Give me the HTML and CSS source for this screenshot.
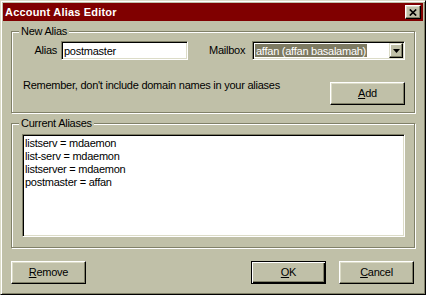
FILE: index.html
```html
<!DOCTYPE html>
<html lang="en">
<head>
  <meta charset="UTF-8" />
  <title>Account Alias Editor</title>
  <link rel="stylesheet" href="styles.css">
</head>
<body>
  <div class="window">
    <div class="titlebar">
      <span class="title">Account Alias Editor</span>
      <button class="close-btn" aria-label="Close">
        <svg width="8" height="7" viewBox="0 0 8 7"><path d="M0.8 0.5 L7.2 6.5 M7.2 0.5 L0.8 6.5" stroke="#000" stroke-width="1.7" fill="none"/></svg>
      </button>
    </div>

    <div class="content">
      <div class="group new-alias">
        <span class="group-title">New Alias</span>
        <div class="alias-row">
          <label class="lbl alias-lbl" for="aliasInput">Alias</label>
          <input type="text" id="aliasInput" class="field alias-input" value="postmaster">
          <span class="lbl mailbox-lbl">Mailbox</span>
          <div class="combo">
            <span class="combo-text"><span class="combo-sel">affan (affan basalamah)</span></span>
            <span class="combo-btn">
              <svg width="7" height="4" viewBox="0 0 7 4"><path d="M0 0h7L3.5 4z" fill="#000"/></svg>
            </span>
          </div>
        </div>
        <div class="hint-row">
          <p class="hint">Remember, don't include domain names in your aliases</p>
          <button class="btn add-btn"><u>A</u>dd</button>
        </div>
      </div>

      <div class="group current">
        <span class="group-title">Current Aliases</span>
        <ul class="alias-list">
          <li>listserv = mdaemon</li>
          <li>list-serv = mdaemon</li>
          <li>listserver = mdaemon</li>
          <li>postmaster = affan</li>
        </ul>
      </div>

      <div class="actions">
        <button class="btn"><u>R</u>emove</button>
        <div class="actions-right">
          <button class="btn default-btn"><u>O</u>K</button>
          <button class="btn"><u>C</u>ancel</button>
        </div>
      </div>
    </div>
  </div>
</body>
</html>
```

FILE: styles.css
```css
* {
  box-sizing: border-box;
}

body {
  margin: 0;
  font-family: 'Liberation Sans', Arial, sans-serif;
  font-size: 11px;
  line-height: 13px;
  letter-spacing: -0.25px;
  color: #000;
  background: #c0c0a8;
}

.window {
  width: 426px;
  height: 295px;
  background: #c0c0a8;
  border: 1px solid;
  border-color: #dcdcc8 #000 #000 #dcdcc8;
  box-shadow: inset 1px 1px #fff, inset -1px -1px #808068;
  padding: 2px;
}

.titlebar {
  height: 18px;
  background: #800000;
  display: flex;
  align-items: center;
  justify-content: space-between;
  padding: 0 2px;
}

.title {
  color: #fff;
  font-weight: bold;
  font-size: 11px;
  letter-spacing: 0.2px;
}

.close-btn {
  width: 16px;
  height: 14px;
  padding: 0;
  background: #c0c0a8;
  border: 1px solid;
  border-color: #fff #000 #000 #fff;
  box-shadow: inset -1px -1px #808068, inset 1px 1px #dcdcc8;
  display: flex;
  align-items: center;
  justify-content: center;
}

.content {
  padding: 10px 8px 0;
}

.group {
  border: 1px solid #808068;
  box-shadow: inset 1px 1px #fff, 1px 1px #fff;
  padding: 0 9px 7px;
}

.group-title {
  display: table;
  margin: -7px 0 0 -2px;
  padding: 0 2px;
  background: #c0c0a8;
}

.alias-row {
  display: flex;
  align-items: center;
  margin-top: 3px;
  height: 19px;
}

.lbl {
  text-align: right;
  margin-right: 4px;
}

.alias-lbl {
  width: 36px;
}

.mailbox-lbl {
  width: 43px;
  margin: 0 0 0 21px;
  text-align: left;
}

.field,
.combo {
  height: 19px;
  background: #fff;
  border: 1px solid;
  border-color: #808068 #fff #fff #808068;
  box-shadow: inset 1px 1px #000, inset -1px -1px #dcdcc8;
}

.field {
  width: 127px;
  padding: 0 2px;
  font: inherit;
  letter-spacing: inherit;
  outline: none;
}

.combo {
  width: 153px;
  display: flex;
  padding: 1px;
}

.combo-text {
  flex: 1;
  padding: 1px;
  display: flex;
}

.combo-sel {
  background: #7d7a62;
  color: #fff;
  padding: 0 1px;
  line-height: 15px;
}

.combo-btn {
  width: 14px;
  background: #c0c0a8;
  border: 1px solid;
  border-color: #dcdcc8 #000 #000 #dcdcc8;
  box-shadow: inset -1px -1px #808068, inset 1px 1px #fff;
  display: flex;
  align-items: center;
  justify-content: center;
}

.hint-row {
  display: flex;
  justify-content: space-between;
  align-items: flex-start;
  margin-top: 19px;
}

.hint {
  margin: 0 0 0 2px;
}

.btn {
  width: 75px;
  height: 23px;
  padding: 0;
  font: inherit;
  letter-spacing: inherit;
  color: #000;
  background: #c0c0a8;
  border: 1px solid;
  border-color: #fff #000 #000 #fff;
  box-shadow: inset -1px -1px #808068, inset 1px 1px #dcdcc8;
}

.add-btn {
  margin-top: 3px;
}

.default-btn {
  border: 1px solid #000;
  box-shadow: inset 1px 1px #fff, inset -1px -1px #000, inset -2px -2px #808068;
}

.current {
  margin-top: 10px;
  padding: 0 9px 10px 10px;
}

.current .group-title {
  margin-left: -3px;
}

.alias-list {
  list-style: none;
  margin: 4px 0 0;
  padding: 2px 0 0 2px;
  height: 103px;
  background: #fff;
  border: 1px solid;
  border-color: #808068 #fff #fff #808068;
  box-shadow: inset 1px 1px #000, inset -1px -1px #dcdcc8;
}

.actions {
  display: flex;
  justify-content: space-between;
  margin-top: 13px;
  padding-right: 1px;
}

.actions-right {
  display: flex;
  gap: 13px;
}
```
